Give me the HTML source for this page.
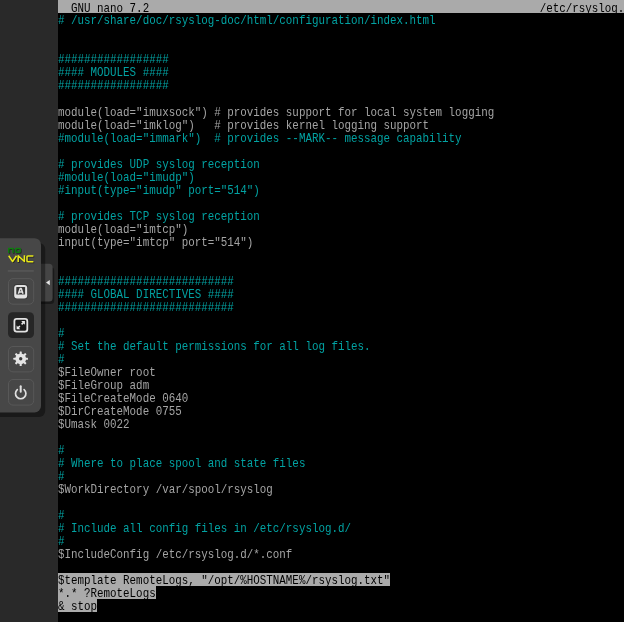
<!DOCTYPE html>
<html><head><meta charset="utf-8">
<style>
html,body{margin:0;padding:0;width:624px;height:622px;overflow:hidden;background:#292929;}
#term{position:absolute;will-change:transform;left:58px;top:0;width:566px;height:622px;background:#000;overflow:hidden;}
.r{position:absolute;left:0;height:13px;white-space:pre;font-family:"Liberation Mono",monospace;font-size:13px;line-height:13px;margin-top:1.5px;transform:scaleX(0.8345);transform-origin:0 0;}
.c{color:#02a2a2;}
.g{color:#a4a4a4;}
.s{color:#000;}
.sel{position:absolute;left:0;height:13px;background:#aaaaaa;}
#title{position:absolute;left:0;top:0;width:566px;height:12.85px;background:#aaaaaa;}
.t{color:#000;}
</style></head><body>
<svg id="vnc" width="58" height="622" style="position:absolute;left:0;top:0">
<rect x="30" y="267" width="24.2" height="37" rx="3.5" fill="#000" opacity="0.38"/>
<rect x="30" y="263.8" width="22.6" height="37.6" rx="3.5" fill="#454545"/>
<path d="M49.8 279.9 L49.8 285.3 L46 282.6 Z" fill="#e6e6e6"/>
<rect x="-10" y="243" width="55.2" height="174" rx="6" fill="#000" opacity="0.38"/>
<rect x="-10" y="238.2" width="51" height="174.2" rx="6.5" fill="#474747"/>
<g fill="none" stroke="#1a1a1a" stroke-linejoin="round" transform="translate(0.8,0.8)" opacity="0.8">
<path d="M8.75 252.9 V248.4 H13 V252.9" stroke-width="1.45"/>
<rect x="15.8" y="248.4" width="4.35" height="3.8" rx="0.6" stroke-width="1.45"/>
<path d="M8.7 255.8 L12.6 261.5 L16.5 255.8 M18.2 262.1 V255.8 L24.4 261.5 V255.2 M33.4 255.9 H27.9 Q27 255.9 27 256.8 V260.8 Q27 261.7 27.9 261.7 H33.4" stroke-width="1.55"/>
</g>
<g fill="none" stroke="#0e7e0e" stroke-width="1.45" stroke-linejoin="round">
<path d="M8.75 252.9 V248.4 H13 V252.9"/>
<rect x="15.8" y="248.4" width="4.35" height="3.8" rx="0.6"/>
</g>
<g fill="none" stroke="#e8e81a" stroke-width="1.55" stroke-linejoin="round">
<path d="M8.7 255.8 L12.6 261.5 L16.5 255.8 M18.2 262.1 V255.8 L24.4 261.5 V255.2 M33.4 255.9 H27.9 Q27 255.9 27 256.8 V260.8 Q27 261.7 27.9 261.7 H33.4"/>
</g>
<rect x="7.8" y="270.4" width="26" height="1.1" fill="#5e5e5e"/>
<rect x="8.5" y="278.6" width="25.2" height="25.6" rx="4.5" fill="none" stroke="#585858" stroke-width="1"/>
<rect x="8" y="312.2" width="26" height="25.8" rx="4.5" fill="#262626"/>
<rect x="8.5" y="346.5" width="25.2" height="25.4" rx="4.5" fill="none" stroke="#585858" stroke-width="1"/>
<rect x="8.5" y="379.5" width="25.2" height="25.6" rx="4.5" fill="none" stroke="#585858" stroke-width="1"/>
<rect x="13.4" y="284.1" width="14.6" height="15.2" rx="3.4" fill="#000" opacity="0.22"/>
<rect x="14.2" y="284.9" width="13" height="13.5" rx="3" fill="#e2e2e2"/>
<rect x="16.3" y="287.1" width="8.8" height="7.5" rx="0.5" fill="#363636"/>
<path d="M18.4 293.8 L20.2 288.6 H21.2 L23 293.8 M19.2 291.9 H22.2" fill="none" stroke="#e2e2e2" stroke-width="1.5" stroke-linejoin="round"/>
<rect x="14.4" y="318.9" width="12.9" height="12.7" rx="2.3" fill="#1c1c1c" stroke="#e2e2e2" stroke-width="1.8"/>
<path d="M24.9 321.1 L21.2 321.1 L24.9 324.8 Z M16.6 329.3 L20.3 329.3 L16.6 325.6 Z" fill="#e8e8e8"/>
<path d="M23.4 322.6 L21.6 324.4 M18.1 327.8 L19.9 326" stroke="#e8e8e8" stroke-width="1.6"/>
<g transform="translate(20.7,358.8)">
<g fill="#e4e4e4">
<circle r="5.4"/>
<rect x="-1.05" y="-7.3" width="2.1" height="14.6" rx="0.5"/>
<rect x="-1.05" y="-7.3" width="2.1" height="14.6" rx="0.5" transform="rotate(45)"/>
<rect x="-1.05" y="-7.3" width="2.1" height="14.6" rx="0.5" transform="rotate(90)"/>
<rect x="-1.05" y="-7.3" width="2.1" height="14.6" rx="0.5" transform="rotate(135)"/>
</g>
<circle r="1.7" fill="#3a3a3a"/>
</g>
<path d="M17.3 389.6 A5.2 5.2 0 1 0 24.1 389.6" fill="none" stroke="#e0e0e0" stroke-width="1.7" stroke-linecap="round"/>
<path d="M20.7 386.3 V391.8" stroke="#e0e0e0" stroke-width="2" stroke-linecap="round"/>
</svg>
<div id="term">
<div id="title"></div>
<div class="r t" style="top:0">  GNU nano 7.2                                                            /etc/rsyslog.conf</div>
<div class="r c" style="top:12.850px"># /usr/share/doc/rsyslog-doc/html/configuration/index.html</div>
<div class="r c" style="top:51.925px">#################</div>
<div class="r c" style="top:64.950px">#### MODULES ####</div>
<div class="r c" style="top:77.975px">#################</div>
<div class="r g" style="top:104.025px">module(load="imuxsock") # provides support for local system logging</div>
<div class="r g" style="top:117.050px">module(load="imklog")   # provides kernel logging support</div>
<div class="r c" style="top:130.075px">#module(load="immark")  # provides --MARK-- message capability</div>
<div class="r c" style="top:156.125px"># provides UDP syslog reception</div>
<div class="r c" style="top:169.150px">#module(load="imudp")</div>
<div class="r c" style="top:182.175px">#input(type="imudp" port="514")</div>
<div class="r c" style="top:208.225px"># provides TCP syslog reception</div>
<div class="r g" style="top:221.250px">module(load="imtcp")</div>
<div class="r g" style="top:234.275px">input(type="imtcp" port="514")</div>
<div class="r c" style="top:273.350px">###########################</div>
<div class="r c" style="top:286.375px">#### GLOBAL DIRECTIVES ####</div>
<div class="r c" style="top:299.400px">###########################</div>
<div class="r c" style="top:325.450px">#</div>
<div class="r c" style="top:338.475px"># Set the default permissions for all log files.</div>
<div class="r c" style="top:351.500px">#</div>
<div class="r g" style="top:364.525px">$FileOwner root</div>
<div class="r g" style="top:377.550px">$FileGroup adm</div>
<div class="r g" style="top:390.575px">$FileCreateMode 0640</div>
<div class="r g" style="top:403.600px">$DirCreateMode 0755</div>
<div class="r g" style="top:416.625px">$Umask 0022</div>
<div class="r c" style="top:442.675px">#</div>
<div class="r c" style="top:455.700px"># Where to place spool and state files</div>
<div class="r c" style="top:468.725px">#</div>
<div class="r g" style="top:481.750px">$WorkDirectory /var/spool/rsyslog</div>
<div class="r c" style="top:507.800px">#</div>
<div class="r c" style="top:520.825px"># Include all config files in /etc/rsyslog.d/</div>
<div class="r c" style="top:533.850px">#</div>
<div class="r g" style="top:546.875px">$IncludeConfig /etc/rsyslog.d/*.conf</div>
<div class="sel" style="top:572.925px;height:13.025px;width:332.01px"></div>
<div class="r s" style="top:572.925px">$template RemoteLogs, "/opt/%HOSTNAME%/rsyslog.txt"</div>
<div class="sel" style="top:585.950px;height:13.025px;width:97.65px"></div>
<div class="r s" style="top:585.950px">*.* ?RemoteLogs</div>
<div class="sel" style="top:598.975px;height:13.025px;width:39.06px"></div>
<div class="r s" style="top:598.975px">&amp; stop</div>
</div>
</body></html>
